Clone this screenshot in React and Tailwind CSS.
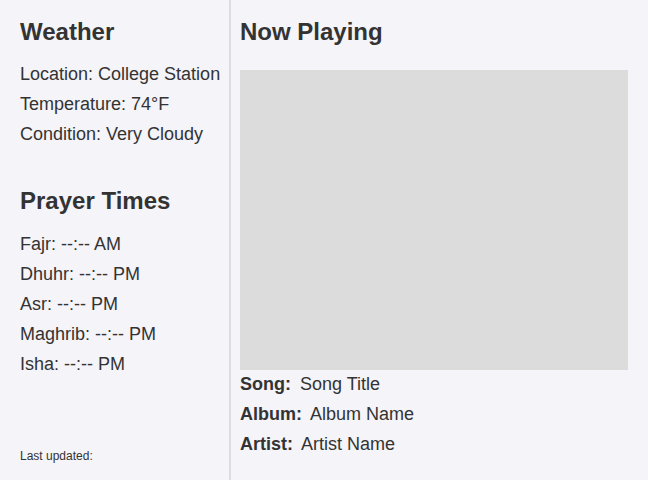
export default function App() {
  const prayers = [
    ["Fajr", "--:-- AM"],
    ["Dhuhr", "--:-- PM"],
    ["Asr", "--:-- PM"],
    ["Maghrib", "--:-- PM"],
    ["Isha", "--:-- PM"],
  ];

  const track = [
    ["Song:", "Song Title"],
    ["Album:", "Album Name"],
    ["Artist:", "Artist Name"],
  ];

  return (
    <div
      className="flex w-[648px] h-[480px] bg-[#f4f4f9] text-[#333] overflow-hidden"
      style={{ fontFamily: '"Liberation Sans", Arial, sans-serif' }}
    >
      {/* LEFT */}
      <div className="w-[231px] shrink-0 border-r-2 border-[#dddddd] flex flex-col pl-5 pt-[18px] pb-[17px]">
        <h2 className="text-[24px] leading-[28px] font-bold mb-[13px]">Weather</h2>
        <div className="text-[18px] leading-[30px]">
          <div>Location: College Station</div>
          <div>Temperature: 74°F</div>
          <div>Condition: Very Cloudy</div>
        </div>

        <h2 className="text-[24px] leading-[28px] font-bold mt-[38px] mb-[14px]">Prayer Times</h2>
        <div className="text-[18px] leading-[30px]">
          {prayers.map(([name, time]) => (
            <div key={name}>
              {name}: {time}
            </div>
          ))}
        </div>

        <p className="mt-auto text-[12px] leading-[14px]">Last updated:</p>
      </div>

      {/* RIGHT */}
      <div className="flex-1 pl-[9px] pr-5 pt-[18px]">
        <h2 className="text-[24px] leading-[28px] font-bold mb-6">Now Playing</h2>
        <div className="w-[388px] h-[300px] bg-[#dcdcdc]" />
        <div className="text-[18px] leading-[30px] -mt-px">
          {track.map(([label, value]) => (
            <div key={label}>
              <span className="font-bold mr-1">{label}</span> {value}
            </div>
          ))}
        </div>
      </div>
    </div>
  );
}
